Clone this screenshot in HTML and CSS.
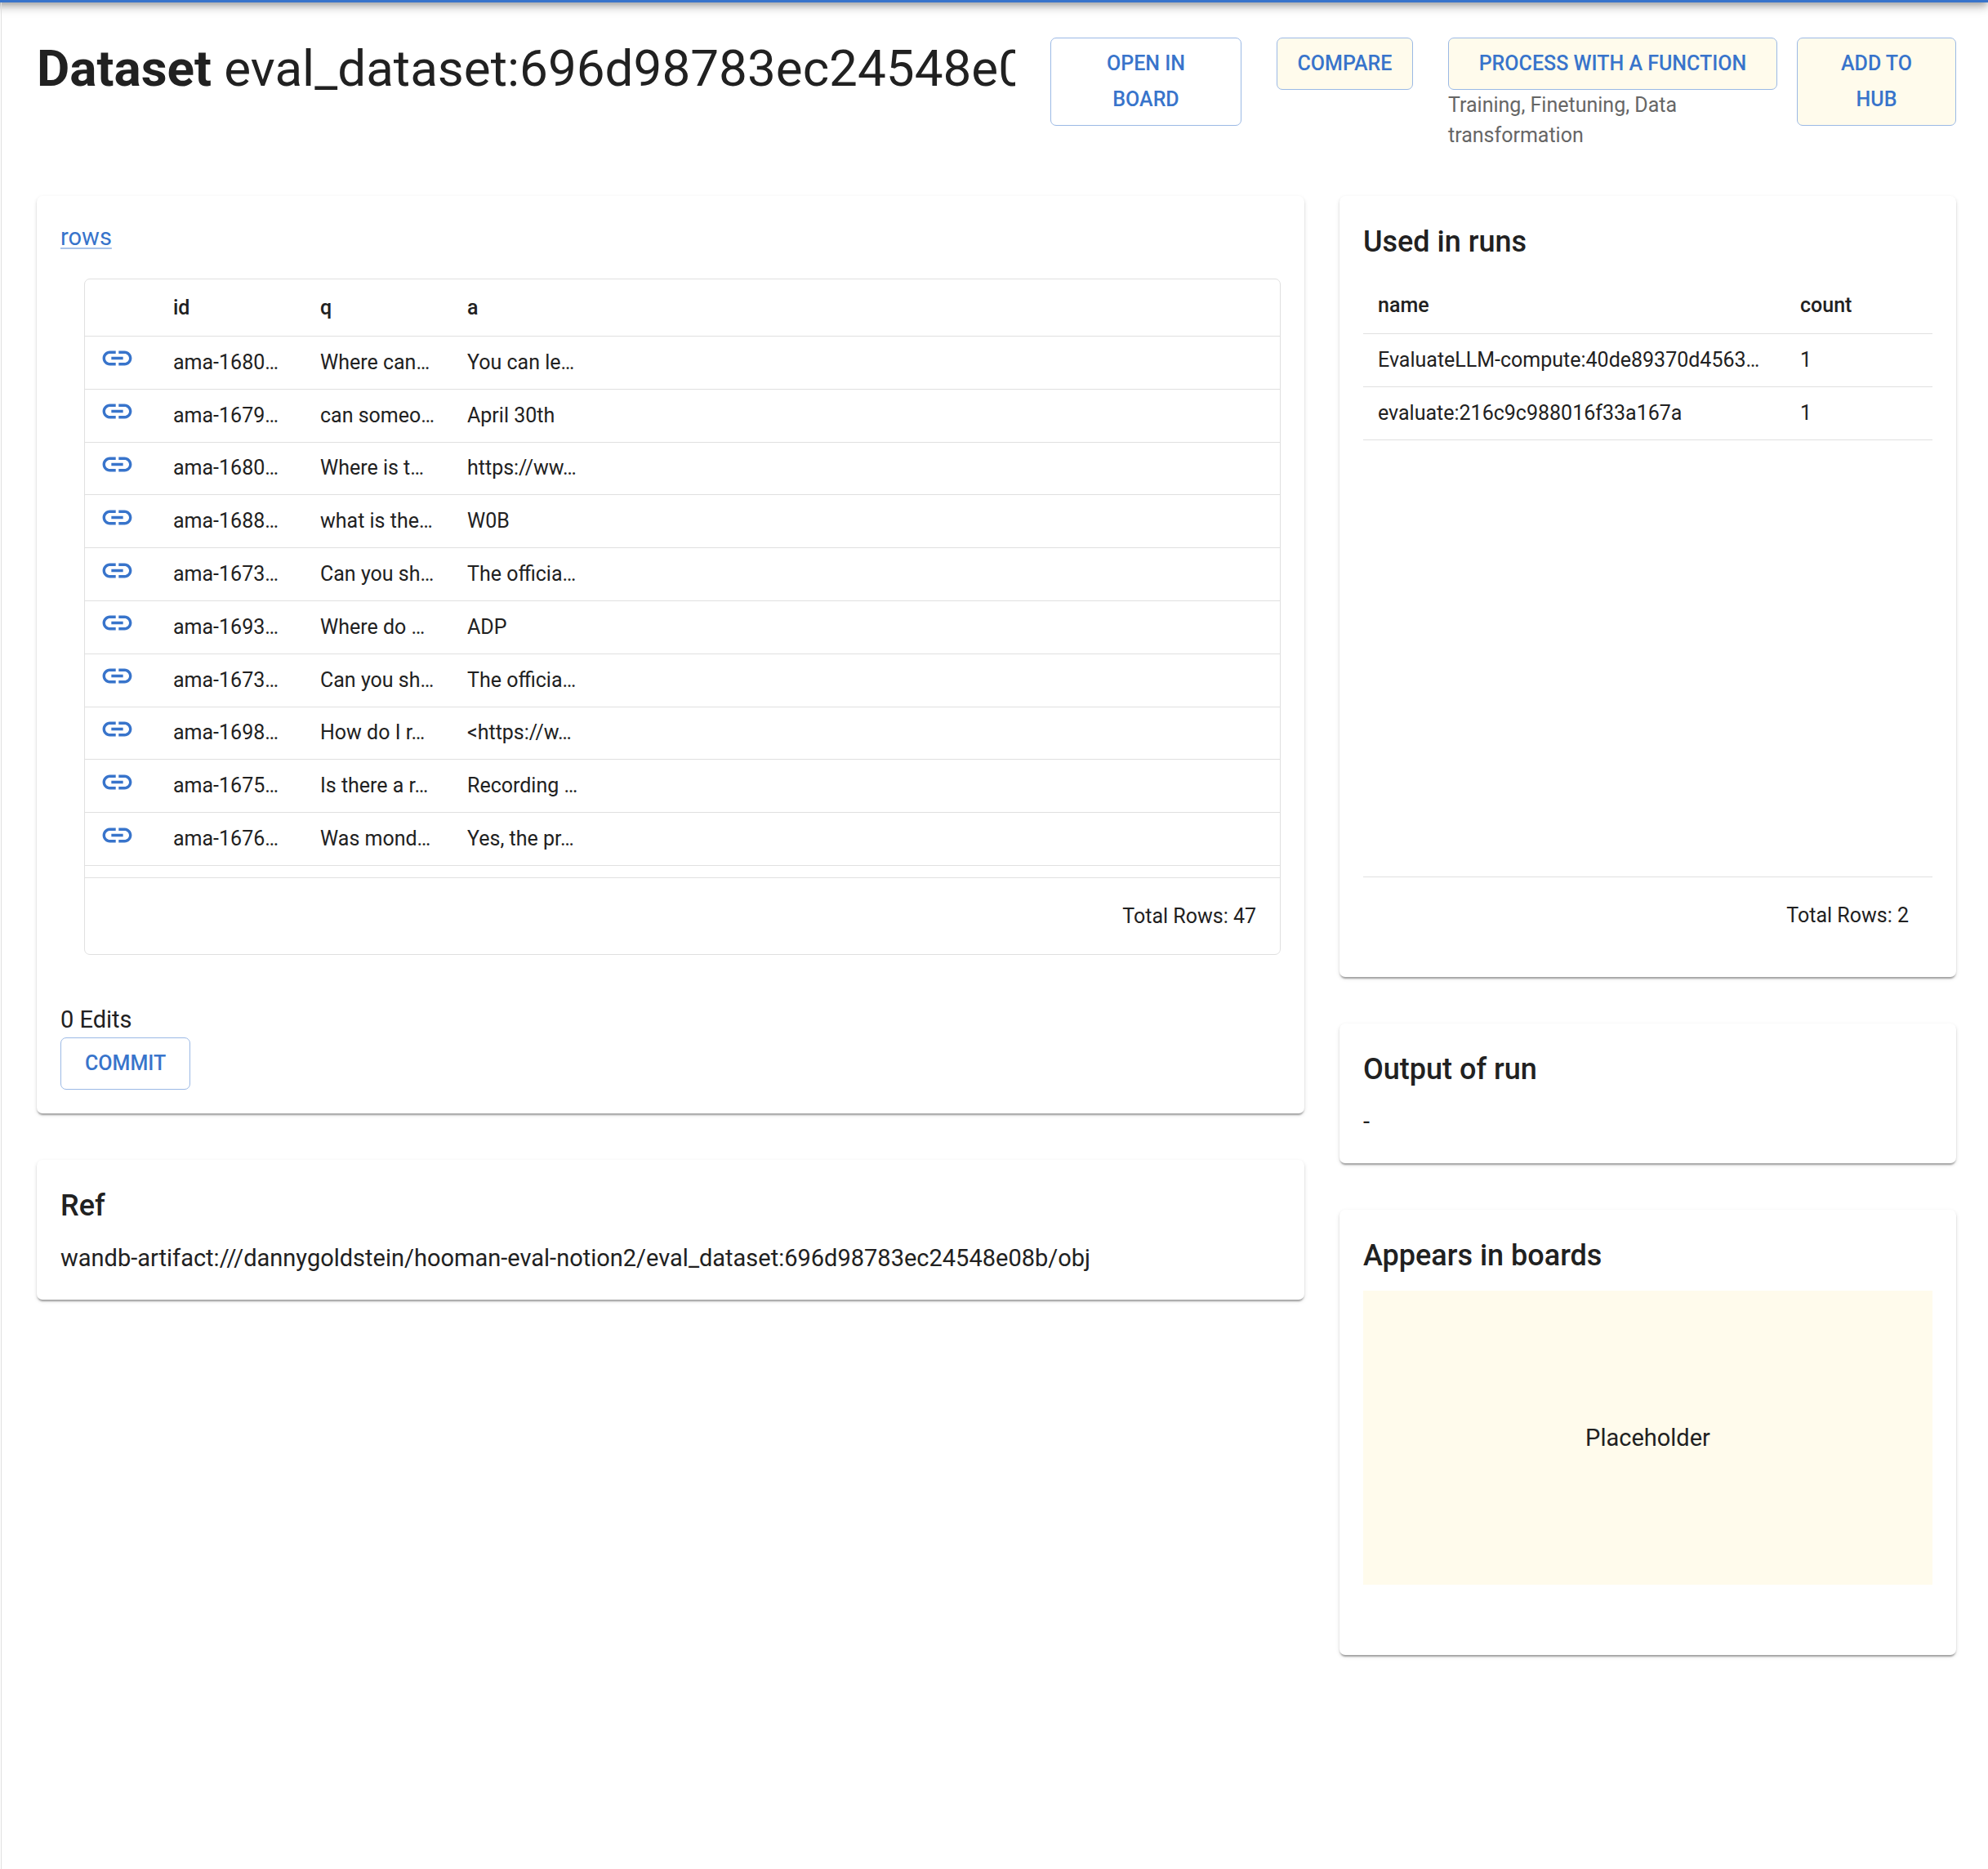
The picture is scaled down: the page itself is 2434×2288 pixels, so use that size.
FILE: index.html
```html
<!DOCTYPE html>
<html lang="en">
<head>
<meta charset="utf-8">
<title>Dataset eval_dataset</title>
<link rel="stylesheet" href="styles.css">
</head>
<body>
<svg class="sprite" aria-hidden="true">
  <symbol id="link" viewBox="0 0 24 24"><path d="M3.9 12c0-1.71 1.39-3.1 3.1-3.1h4V7H7c-2.76 0-5 2.24-5 5s2.24 5 5 5h4v-1.9H7c-1.71 0-3.1-1.39-3.1-3.1zM8 13h8v-2H8v2zm9-6h-4v1.9h4c1.71 0 3.1 1.39 3.1 3.1s-1.39 3.1-3.1 3.1h-4V17h4c2.76 0 5-2.24 5-5s-2.24-5-5-5z"/></symbol>
</svg>
<div class="app-bar"></div>
<main class="page">
  <header class="page-header">
    <h1 class="title"><strong>Dataset</strong> eval_dataset:696d98783ec24548e08b</h1>
    <button type="button" class="btn btn-open">Open in board</button>
    <button type="button" class="btn btn-todo btn-compare">Compare</button>
    <div class="header-group">
      <div class="process">
        <button type="button" class="btn btn-todo">Process with a function</button>
        <p class="hint">Training, Finetuning, Data transformation</p>
      </div>
      <button type="button" class="btn btn-todo btn-hub">Add to hub</button>
    </div>
  </header>

  <div class="columns">
    <div class="stack">
      <section class="card">
        <a class="field-link" href="#rows">rows</a>
        <div class="grid-box grid-outlined">
          <div class="grid-body">
            <table class="data data-rows">
              <colgroup><col class="col-icon"><col class="col-cell"><col class="col-cell"><col class="col-cell"><col></colgroup>
              <thead><tr><th></th><th>id</th><th>q</th><th>a</th><th></th></tr></thead>
              <tbody>
                <tr><td><a class="row-link" href="#1" aria-label="Open row"><svg><use href="#link"/></svg></a></td><td>ama-1680…</td><td>Where can…</td><td>You can le…</td><td></td></tr>
                <tr><td><a class="row-link" href="#2" aria-label="Open row"><svg><use href="#link"/></svg></a></td><td>ama-1679…</td><td>can someo…</td><td>April 30th</td><td></td></tr>
                <tr><td><a class="row-link" href="#3" aria-label="Open row"><svg><use href="#link"/></svg></a></td><td>ama-1680…</td><td>Where is t…</td><td>https://ww…</td><td></td></tr>
                <tr><td><a class="row-link" href="#4" aria-label="Open row"><svg><use href="#link"/></svg></a></td><td>ama-1688…</td><td>what is the…</td><td>W0B</td><td></td></tr>
                <tr><td><a class="row-link" href="#5" aria-label="Open row"><svg><use href="#link"/></svg></a></td><td>ama-1673…</td><td>Can you sh…</td><td>The officia…</td><td></td></tr>
                <tr><td><a class="row-link" href="#6" aria-label="Open row"><svg><use href="#link"/></svg></a></td><td>ama-1693…</td><td>Where do …</td><td>ADP</td><td></td></tr>
                <tr><td><a class="row-link" href="#7" aria-label="Open row"><svg><use href="#link"/></svg></a></td><td>ama-1673…</td><td>Can you sh…</td><td>The officia…</td><td></td></tr>
                <tr><td><a class="row-link" href="#8" aria-label="Open row"><svg><use href="#link"/></svg></a></td><td>ama-1698…</td><td>How do I r…</td><td>&lt;https://w…</td><td></td></tr>
                <tr><td><a class="row-link" href="#9" aria-label="Open row"><svg><use href="#link"/></svg></a></td><td>ama-1675…</td><td>Is there a r…</td><td>Recording …</td><td></td></tr>
                <tr><td><a class="row-link" href="#10" aria-label="Open row"><svg><use href="#link"/></svg></a></td><td>ama-1676…</td><td>Was mond…</td><td>Yes, the pr…</td><td></td></tr>
              </tbody>
            </table>
          </div>
          <div class="grid-footer">Total Rows: 47</div>
        </div>
        <p class="edits">0 Edits</p>
        <button type="button" class="btn">Commit</button>
      </section>

      <section class="card">
        <h2 class="card-title">Ref</h2>
        <p class="text">wandb-artifact:///dannygoldstein/hooman-eval-notion2/eval_dataset:696d98783ec24548e08b/obj</p>
      </section>
    </div>

    <div class="stack">
      <section class="card">
        <h2 class="card-title">Used in runs</h2>
        <div class="grid-box">
          <div class="grid-body">
            <table class="data">
              <colgroup><col><col class="col-cell"></colgroup>
              <thead><tr><th>name</th><th>count</th></tr></thead>
              <tbody>
                <tr><td>EvaluateLLM-compute:40de89370d4563…</td><td>1</td></tr>
                <tr><td>evaluate:216c9c988016f33a167a</td><td>1</td></tr>
              </tbody>
            </table>
          </div>
          <div class="grid-footer">Total Rows: 2</div>
        </div>
      </section>

      <section class="card">
        <h2 class="card-title">Output of run</h2>
        <p class="text">-</p>
      </section>

      <section class="card">
        <h2 class="card-title">Appears in boards</h2>
        <div class="placeholder">Placeholder</div>
      </section>
    </div>
  </div>
</main>
</body>
</html>
```
FILE: styles.css
```css
* { box-sizing: border-box; }

body {
  margin: 0;
  padding-left: 1px;
  min-height: 100vh;
  display: flex;
  flex-direction: column;
  overflow-x: hidden;
  background: #fff;
  color: #212121;
  font-family: Roboto, "Liberation Sans", sans-serif;
  font-size: 29px;
  line-height: 43px;
}

h1, h2, p { margin: 0; }

.sprite { display: none; }

/* Only the lower edge of the bar shows above the page */
.app-bar {
  flex: none;
  height: 115px;
  margin: -112px 0 0 -21px;
  background: #3874cb;
  box-shadow: 0 4px 7px -2px rgba(0, 0, 0, .2), 0 7px 9px rgba(0, 0, 0, .14), 0 2px 18px rgba(0, 0, 0, .12);
}

.page {
  flex: 1;
  padding: 43px 39px 43px 43px;
  border-left: 1px solid #e0e0e0;
}

.page-header {
  display: flex;
  align-items: flex-start;
  gap: 43px;
  margin-bottom: 56px;
}

.title {
  flex: 1;
  min-width: 0;
  overflow: hidden;
  white-space: nowrap;
  font-size: 62px;
  line-height: 75px;
  font-weight: 400;
}

.title strong { font-weight: 700; }

.header-group {
  display: flex;
  align-items: flex-start;
  gap: 24px;
}

.process { width: 403px; }
.process .btn { width: 100%; }

.hint {
  color: #666;
  font-size: 25px;
  line-height: 37px;
}

.btn {
  display: inline-block;
  padding: 9px 29px;
  border: 1px solid #9bb9e5;
  border-radius: 7px;
  background: transparent;
  color: #3874cb;
  font: 500 25px/44px Roboto, "Liberation Sans", sans-serif;
  text-transform: uppercase;
  vertical-align: top;
}

.btn-todo { background: #fffbec; }
.btn-open { width: 234px; }
.btn-compare { width: 167px; padding: 9px 18px; }
.btn-hub { width: 195px; }

.columns {
  display: grid;
  grid-template-columns: minmax(0, 1552fr) minmax(0, 755fr);
  align-items: start;
  gap: 43px;
}

.stack {
  display: grid;
  gap: 57px;
}

.card {
  padding: 29px;
  border-radius: 7px;
  background: #fff;
  box-shadow: 0 4px 2px -2px rgba(0, 0, 0, .2), 0 2px 2px rgba(0, 0, 0, .14), 0 2px 5px rgba(0, 0, 0, .12);
}

.card-title {
  margin-bottom: 15px;
  font-size: 36px;
  line-height: 55px;
  font-weight: 500;
}

.field-link {
  display: block;
  width: fit-content;
  color: #3874cb;
  text-decoration-color: #a9c3e9;
  text-decoration-thickness: 2px;
  text-underline-offset: 3px;
}

.grid-body { height: 734px; }

.grid-outlined {
  margin: 29px 0 58px 29px;
  border: 1px solid #e0e0e0;
  border-radius: 7px;
}

.grid-outlined .grid-body { height: 732px; }

.grid-footer {
  height: 94px;
  padding: 0 29px;
  border-top: 1px solid #e0e0e0;
  font-size: 25px;
  line-height: 93px;
  text-align: right;
}

.data {
  width: 100%;
  table-layout: fixed;
  border-collapse: separate;
  border-spacing: 0;
  font-size: 25px;
  line-height: 36px;
}

.data-rows { height: 718px; }

.col-icon { width: 90px; }
.col-cell { width: 180px; }

.data th,
.data td {
  padding: 0 18px;
  border-bottom: 1px solid #e0e0e0;
  overflow: hidden;
  text-align: left;
  text-overflow: ellipsis;
  white-space: nowrap;
}

.data th {
  height: 70px;
  font-weight: 500;
}

.data td { height: 65px; }
.data-rows td { height: 64px; }

.row-link {
  display: block;
  padding-bottom: 10px;
}

.row-link svg {
  display: block;
  width: 43px;
  height: 43px;
  fill: #3874cb;
}

.placeholder {
  display: flex;
  align-items: center;
  justify-content: center;
  height: 360px;
  margin-bottom: 57px;
  background: #fffbec;
}
```
